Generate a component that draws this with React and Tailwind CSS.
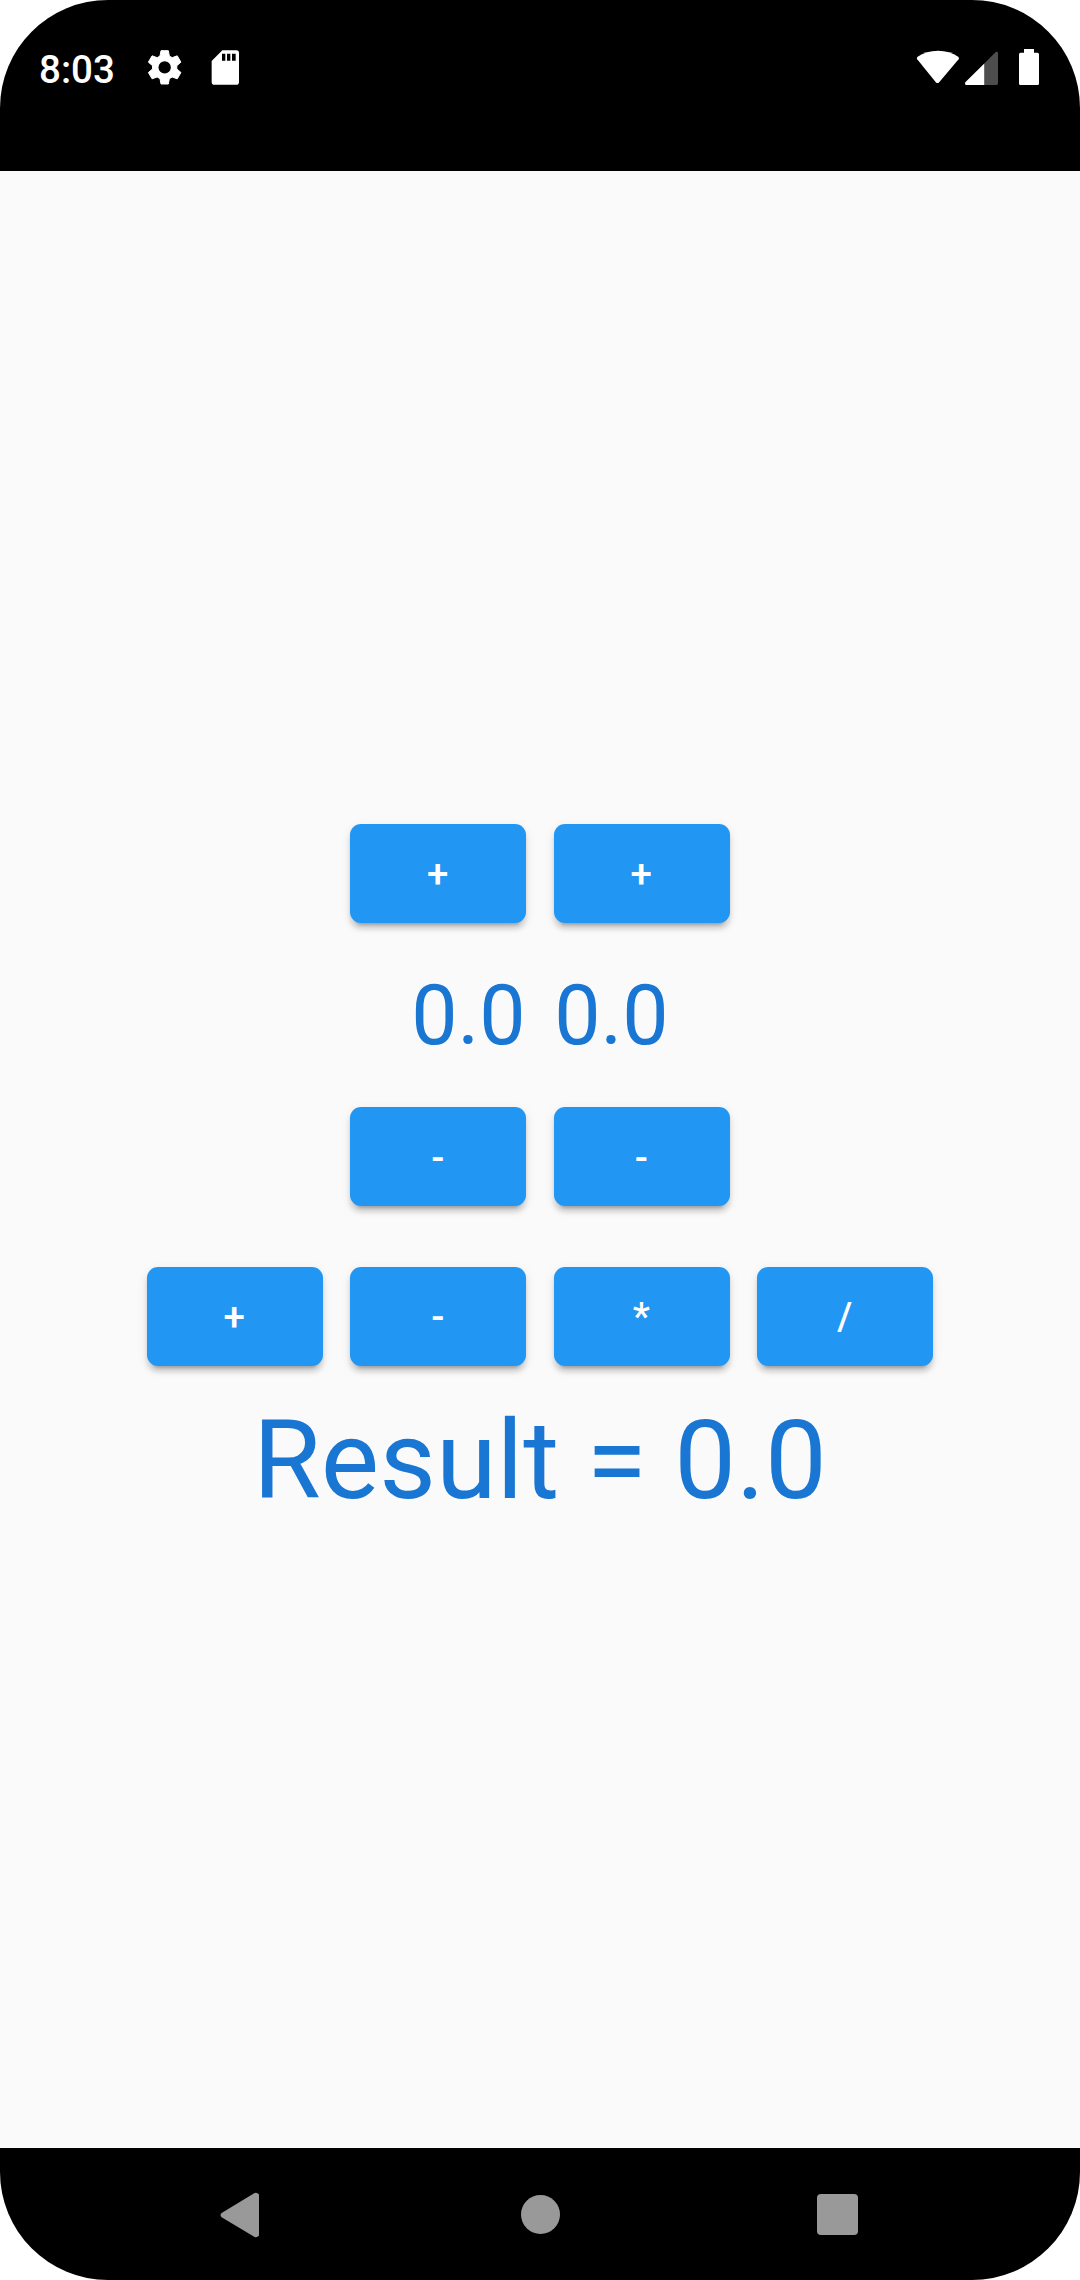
function Key({ children }) {
  return (
    <button className="flex h-[99px] w-[176px] items-center justify-center rounded-[11px] bg-[#2196f3] pt-[1.7px] text-[38.5px] leading-[44px] font-medium tracking-[1px] text-white shadow-[0_8px_3px_-6px_rgba(0,0,0,0.2),0_5.5px_5.5px_rgba(0,0,0,0.14),0_3px_12px_rgba(0,0,0,0.08)]">
      {children}
    </button>
  );
}

function KeyRow({ keys }) {
  return (
    <div className="flex h-[132px] items-center gap-[27.5px]">
      {keys.map((k, i) => (
        <Key key={i}>{k}</Key>
      ))}
    </div>
  );
}

function GearIcon() {
  return (
    <svg className="h-[50px] w-[50px]" viewBox="-74 -76 150 150">
      <path
        d="M-14-34L-11-50H11L14-34L22.4-29.1L37.8-34.5L48.8-15.5L36.4-4.9V4.9L48.8 15.5L37.8 34.5L22.4 29.1L14 34L11 50H-11L-14 34L-22.4 29.1L-37.8 34.5L-48.8 15.5L-36.4 4.9V-4.9L-48.8-15.5L-37.8-34.5L-22.4-29.1Z"
        fill="white"
        stroke="white"
        strokeWidth="3"
        strokeLinejoin="round"
      />
      <circle r="18.5" fill="black" />
    </svg>
  );
}

function SdCardIcon() {
  return (
    <svg className="ml-[15px] h-[50px] w-[50px]" viewBox="0 0 150 150">
      <path
        d="M52 25H94Q102 25 102 33V120Q102 128.5 94 128.5H28Q20 128.5 20 120V57ZM51 35V56H61V35ZM66 35V56H76V35ZM81 35V56H92V35Z"
        fill="white"
        fillRule="evenodd"
      />
    </svg>
  );
}

function StatusBar() {
  return (
    <header className="flex h-[171px] items-start bg-black pt-[42px] text-white">
      <span className="mt-[5px] ml-[39px] w-[101px] text-[38.5px] leading-[46px] font-medium">8:03</span>
      <GearIcon />
      <SdCardIcon />
      <svg className="mt-[4px] ml-auto h-[40px] w-[44px]" viewBox="0 0 44 40" fill="currentColor">
        <path d="M1.2 13.2Q.3 11.9 1.6 10.8Q10 4.7 22 4.7T42.2 10.8Q43.6 11.9 42.6 13.2L23.2 36.2Q21.5 38 19.8 36.2Z" />
      </svg>
      <svg className="mt-[4px] ml-[5.5px] h-[40px] w-[33px]" viewBox="0 0 33 40">
        <path d="M19.3 17.5L29.7 7Q31 5.5 32 5.7Q33 6 33 7V37Q33 39 31.5 39H19.3Z" fill="#4d4d4d" />
        <path d="M19.3 17.5V39H1.5Q0 39 0 37.5Q0 36.5 .8 35.8Z" fill="white" />
      </svg>
      <svg className="mt-[4px] mr-[41px] ml-[21px] h-[40px] w-[20px]" viewBox="0 0 20 40" fill="currentColor">
        <path d="M5 3H15V6.7H18.5Q20 6.7 20 8.2V37.5Q20 39 18.5 39H1.5Q0 39 0 37.5V8.2Q0 6.7 1.5 6.7H5Z" />
      </svg>
    </header>
  );
}

function NavBar() {
  return (
    <nav className="flex h-[132px] items-center bg-black pt-[1px] text-[#999999]">
      <svg className="ml-[220px] h-[46px] w-[40px]" viewBox="0 0 40 46" fill="currentColor">
        <path d="M1.6 25.2Q-.6 23 1.6 20.9L34.6 1.1Q37 .2 39 2.5V43.6Q37 45.8 34.6 44.9Z" />
      </svg>
      <div className="ml-[260.5px] h-[39px] w-[39px] rounded-full bg-[#999999]" />
      <div className="ml-[257.5px] h-[41.3px] w-[41.3px] rounded-[4px] bg-[#999999]" />
    </nav>
  );
}

export default function App() {
  return (
    <div className="h-[2280px] w-[1080px] overflow-hidden bg-white">
      <div className="flex h-full flex-col overflow-hidden rounded-[108px] bg-[#fafafa] font-[Roboto,sans-serif]">
        <StatusBar />
        <main className="flex flex-1 flex-col items-center pt-[636.5px] text-[#1976d2]">
          <KeyRow keys={["+", "+"]} />
          <div className="mt-[28.5px] mb-[26.5px] flex h-[96.25px] gap-[28.5px] text-[82.5px] leading-[96.25px]">
            <span>0.0</span>
            <span>0.0</span>
          </div>
          <KeyRow keys={["-", "-"]} />
          <div className="mt-[27.5px]">
            <KeyRow keys={["+", "-", "*", "/"]} />
          </div>
          <p className="mt-[14px] text-[110px] leading-[129px] whitespace-pre">Result = 0.0</p>
        </main>
        <NavBar />
      </div>
    </div>
  );
}
